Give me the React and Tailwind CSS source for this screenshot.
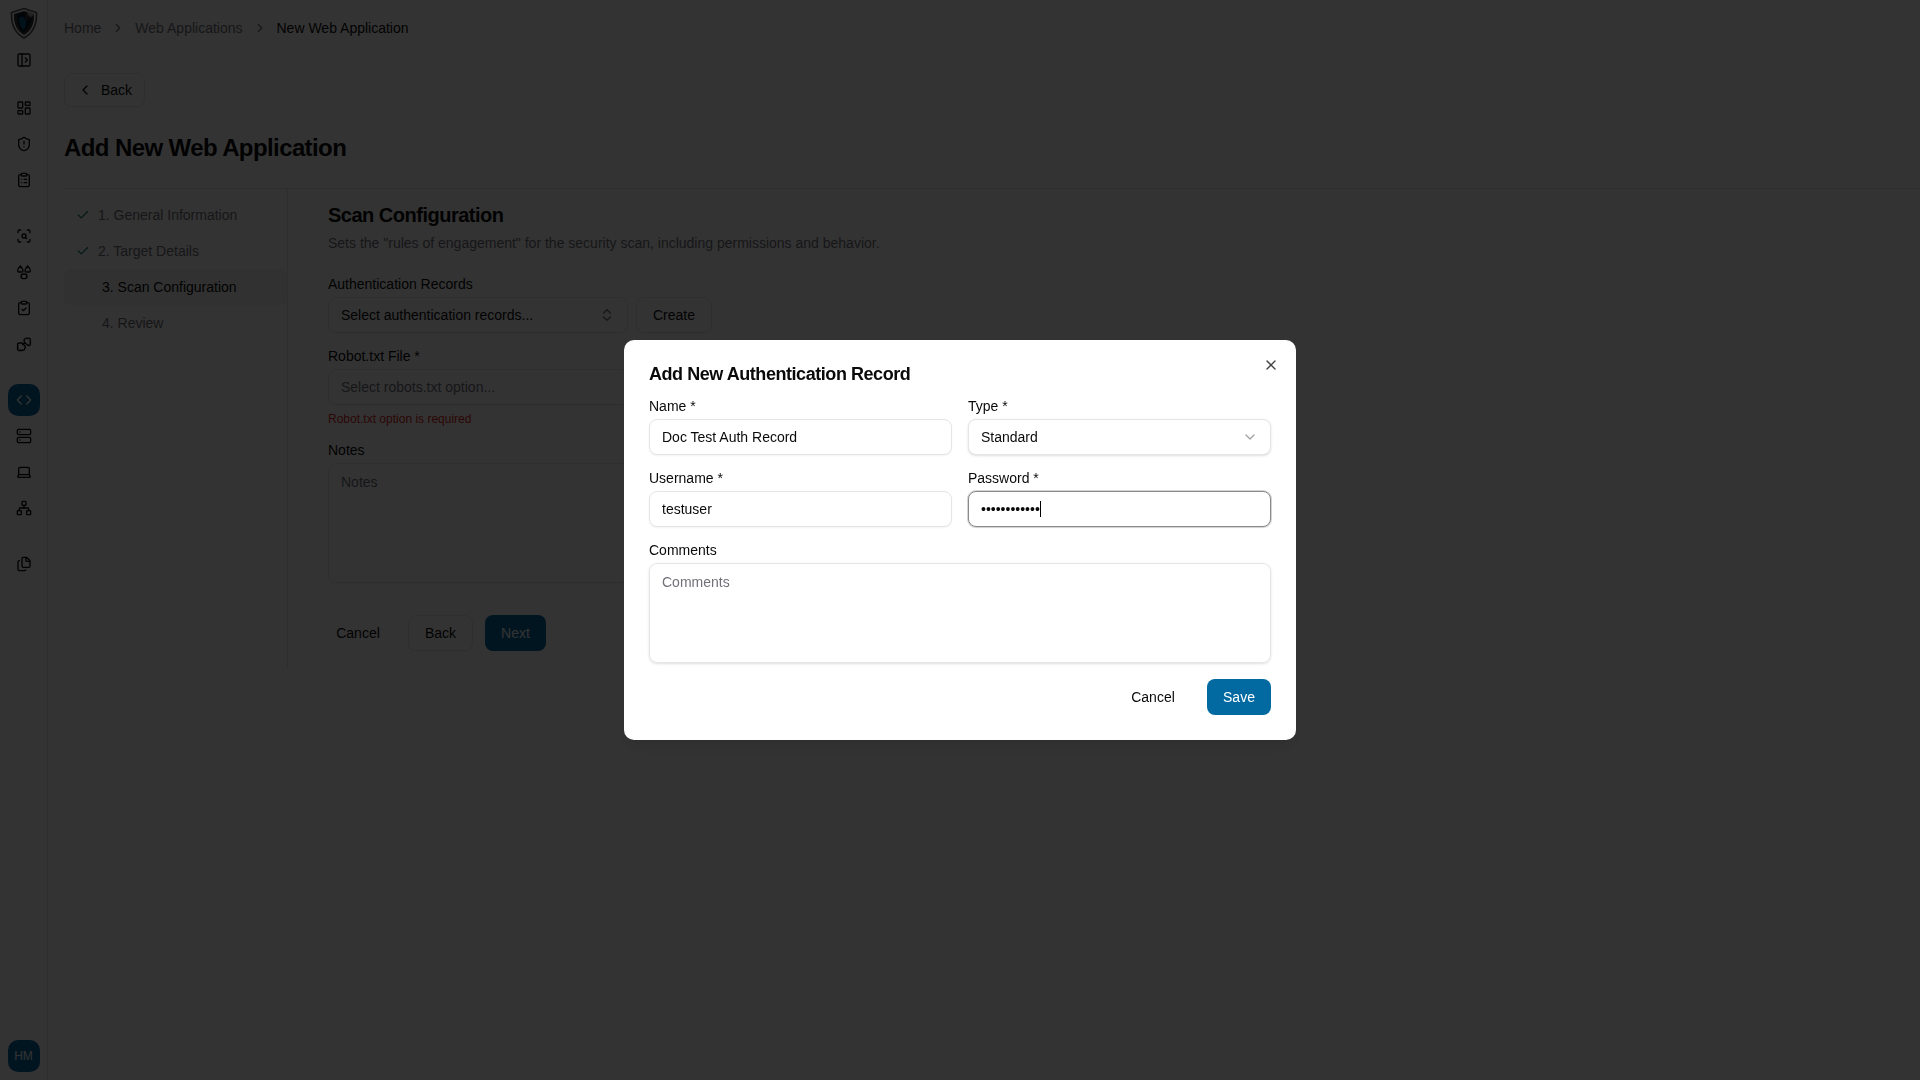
import React from "react";
import { LayoutDashboard, ShieldAlert, ClipboardList, ScanSearch, ClipboardCheck, Code, Server, Laptop, Network, Files, PanelLeftOpen, ChevronRight, ChevronLeft, ChevronDown, ChevronsUpDown, Check, X } from "lucide-react";

function Logo() {
  return (
    <svg width="28" height="32" viewBox="0 0 28 32">
      <path d="M14 1.5 L26.5 5.5 C27 17 23.5 26 14 31 C4.5 26 1 17 1.5 5.5 Z" fill="none" stroke="#555" strokeWidth="1.6" />
      <path d="M14 4 L24 7 C24.5 16 21.5 24 14 28 C6.5 24 3.5 16 4 7 Z" fill="#333" />
      <path d="M15 5 L7 8 C7 16 9 22 13.5 25.5 C18 22 21 17 22 11 L15 14 Z" fill="#041a2a" />
      <path d="M13 9 L9 11 C9 16 10.5 20 13.5 23 C15.5 20 16 17 16 14 Z" fill="#0c5a88" />
      <path d="M17 4 L25 7 L21 10 L18 8 Z" fill="#aaa" />
    </svg>
  );
}

function Radiate({ className }) {
  return (
    <svg className={className} viewBox="0 0 24 24" fill="none" stroke="currentColor" strokeWidth="2" strokeLinecap="round" strokeLinejoin="round">
      <path d="M6.5 3 C4.5 5 2.5 8 2.5 10 a2 2 0 0 0 2 2 h4 a2 2 0 0 0 2-2 C10.500 8 8.500 5 6.500 3 Z" />
      <path d="M17.500 3 C15.500 5 13.500 8 13.500 10 a2 2 0 0 0 2 2 h4 a2 2 0 0 0 2-2 C21.500 8 19.500 5 17.500 3 Z" />
      <rect x="7.500" y="15" width="9" height="7" rx="3.500" />
    </svg>
  );
}

function Puzzle2({ className }) {
  return (
    <svg className={className} viewBox="0 0 24 24" fill="none" stroke="currentColor" strokeWidth="2" strokeLinecap="round" strokeLinejoin="round">
      <path d="M14 4 a2.200 2.200 0 0 1 3.500 0 a2.200 2.200 0 0 1 3.500 3 a2.200 2.200 0 0 1 0 3.500 a2.200 2.200 0 0 1 -3.500 3 l-4 -3 a2.200 2.200 0 0 1 -1 -3 a2.200 2.200 0 0 1 1.500 -3.500 Z" />
      <path d="M6 11 a2.200 2.200 0 0 1 3.500 0 l4 4 a2.200 2.200 0 0 1 -.500 3.500 a2.200 2.200 0 0 1 -3 2.500 a2.200 2.200 0 0 1 -3.500 0 a2.200 2.200 0 0 1 -3.500 -3 a2.200 2.200 0 0 1 0 -3.500 a2.200 2.200 0 0 1 3 -3.500 Z" />
      <path d="M10 13 l3 -3" />
    </svg>
  );
}

const I = ({ icon: Icon }) => (
  <div className="flex h-9 w-full items-center justify-center text-[#0a0a0a]"><Icon className="size-4" strokeWidth={2} /></div>
);

function Sidebar() {
  return (
    <aside className="flex h-screen w-12 shrink-0 flex-col items-center border-r border-gray-200 bg-white">
      <div className="mt-[7px] flex h-8 items-center justify-center"><Logo /></div>
      <div className="mt-[5px]"><div className="flex h-8 w-12 items-center justify-center text-[#0a0a0a]"><PanelLeftOpen className="size-4" /></div></div>
      <div className="mt-[14px] w-full"><I icon={LayoutDashboard} /><I icon={ShieldAlert} /><I icon={ClipboardList} /></div>
      <div className="mt-5 w-full"><I icon={ScanSearch} /><I icon={Radiate} /><I icon={ClipboardCheck} /><I icon={Puzzle2} /></div>
      <div className="mt-[20px] flex w-full flex-col items-center">
        <div className="my-[2px] flex size-8 items-center justify-center rounded-[10px] bg-[#0369a1] text-white"><Code className="size-4" /></div>
        <I icon={Server} /><I icon={Laptop} /><I icon={Network} />
      </div>
      <div className="mt-5 w-full"><I icon={Files} /></div>
      <div className="mt-auto mb-2 flex size-8 items-center justify-center rounded-[10px] bg-[#0369a1] text-xs text-white">HM</div>
    </aside>
  );
}

function Main() {
  return (
    <main className="min-w-0 flex-1 pl-4">
      <nav className="flex h-14 items-center gap-[10px] pb-[1px] text-sm text-[#71717a]">
        <span>Home</span><ChevronRight className="size-[14px]" />
        <span>Web Applications</span><ChevronRight className="size-[14px]" />
        <span className="text-[#0a0a0a]">New Web Application</span>
      </nav>
      <button className="mt-[17px] flex h-[34px] w-[81px] items-center gap-[8px] rounded-lg border border-gray-200 pl-[12px] text-sm text-[#0a0a0a] shadow-xs">
        <ChevronLeft className="size-4" />Back
      </button>
      <h1 className="mt-[25px] text-2xl leading-8 font-bold tracking-tight text-[#0a0a0a]">Add New Web Application</h1>
      <div className="mt-[24px] flex h-[480px] border-t border-gray-200">
        <div className="w-[224px] shrink-0 border-r border-gray-200 pt-[8px] text-sm text-[#71717a]">
          <div className="flex h-9 items-center gap-2 pl-3"><Check className="size-[14px] text-[#0f766e]" />1. General Information</div>
          <div className="flex h-9 items-center gap-2 pl-3"><Check className="size-[14px] text-[#0f766e]" />2. Target Details</div>
          <div className="flex h-9 items-center rounded-md bg-gray-100 pl-[38px] text-[#0a0a0a]">3. Scan Configuration</div>
          <div className="flex h-9 items-center pl-[38px]">4. Review</div>
        </div>
        <div className="pl-10 pt-[12px]">
          <h2 className="text-xl leading-7 font-semibold tracking-tight text-[#0a0a0a]">Scan Configuration</h2>
          <p className="mt-[4px] text-sm text-[#71717a]">Sets the "rules of engagement" for the security scan, including permissions and behavior.</p>
          <label className="mt-[21px] block text-sm text-[#0a0a0a]">Authentication Records</label>
          <div className="mt-[3px] flex gap-2">
            <div className="flex h-9 w-[300px] items-center justify-between rounded-lg border border-gray-200 px-3 text-sm text-[#0a0a0a] shadow-xs">Select authentication records...<ChevronsUpDown className="size-4 text-[#71717a]" /></div>
            <div className="flex h-9 w-[76px] items-center justify-center rounded-lg border border-gray-200 text-sm text-[#0a0a0a] shadow-xs">Create</div>
          </div>
          <label className="mt-[13px] block text-sm text-[#0a0a0a]">Robot.txt File *</label>
          <div className="mt-[3px] flex h-9 w-[500px] items-center rounded-lg border border-gray-200 px-3 text-sm text-[#71717a] shadow-xs">Select robots.txt option...</div>
          <p className="mt-[6px] text-xs leading-4 text-[#dc2626]">Robot.txt option is required</p>
          <label className="mt-[13px] block text-sm text-[#0a0a0a]">Notes</label>
          <div className="mt-[3px] h-[120px] w-[500px] rounded-lg border border-gray-200 px-3 pt-[8px] text-sm text-[#71717a] shadow-xs">Notes</div>
          <div className="mt-[32px] flex">
            <div className="flex h-9 w-[60px] items-center justify-center text-sm text-[#0a0a0a]">Cancel</div>
            <div className="ml-5 flex h-9 w-[65px] items-center justify-center rounded-lg border border-gray-200 text-sm text-[#0a0a0a] shadow-xs">Back</div>
            <div className="ml-3 flex h-9 w-[61px] items-center justify-center rounded-lg bg-[#0369a1] text-sm text-white">Next</div>
          </div>
        </div>
      </div>
    </main>
  );
}

const Label = ({ children }) => <label className="block text-sm leading-[18px] text-[#0a0a0a]">{children}</label>;
const inputCls = "mt-[4px] flex h-9 items-center rounded-lg border border-[#e5e5e5] bg-white px-3 text-sm text-[#0a0a0a]";

function Modal() {
  return (
    <div className="fixed inset-0 flex items-center justify-center bg-black/80">
      <div className="relative h-[400px] w-[672px] rounded-[10px] bg-white px-[25px] pt-[25px] shadow-lg">
        <button className="absolute top-[17px] right-[17px] text-[#404040]"><X className="size-4" /></button>
        <h3 className="text-lg leading-[18px] font-semibold tracking-tight text-[#0a0a0a]">Add New Authentication Record</h3>
        <div className="mt-[14px] grid grid-cols-2 gap-x-4 gap-y-[14px]">
          <div><Label>Name *</Label><div className={inputCls + " shadow-xs"}>Doc Test Auth Record</div></div>
          <div><Label>Type *</Label><div className={inputCls + " justify-between shadow-sm"}>Standard<ChevronDown className="size-4 text-[#a3a3a3]" /></div></div>
          <div><Label>Username *</Label><div className={inputCls + " shadow-xs"}>testuser</div></div>
          <div><Label>Password *</Label>
            <div className="mt-[4px] flex h-9 items-center rounded-lg border border-[#8a8a8a] bg-white px-3 text-sm text-[#0a0a0a] shadow-xs ring-[1px] ring-[#d4d4d4]">
              <span>••••••••••••</span><span className="h-4 w-px bg-black" />
            </div>
          </div>
        </div>
        <div className="mt-[14px]">
          <Label>Comments</Label>
          <div className="mt-[4px] h-[100px] rounded-lg border border-[#e5e5e5] px-3 pt-[8px] text-sm text-[#71717a] shadow-sm">Comments</div>
        </div>
        <div className="mt-4 flex items-center justify-end gap-4">
          <button className="flex h-9 w-[76px] items-center justify-center text-sm text-[#0a0a0a]">Cancel</button>
          <button className="flex h-9 w-16 items-center justify-center rounded-lg bg-[#0369a1] text-sm text-white">Save</button>
        </div>
      </div>
    </div>
  );
}

export default function App() {
  return (
    <div className="flex h-screen overflow-hidden bg-white font-['Liberation_Sans',sans-serif]">
      <Sidebar />
      <Main />
      <Modal />
    </div>
  );
}
